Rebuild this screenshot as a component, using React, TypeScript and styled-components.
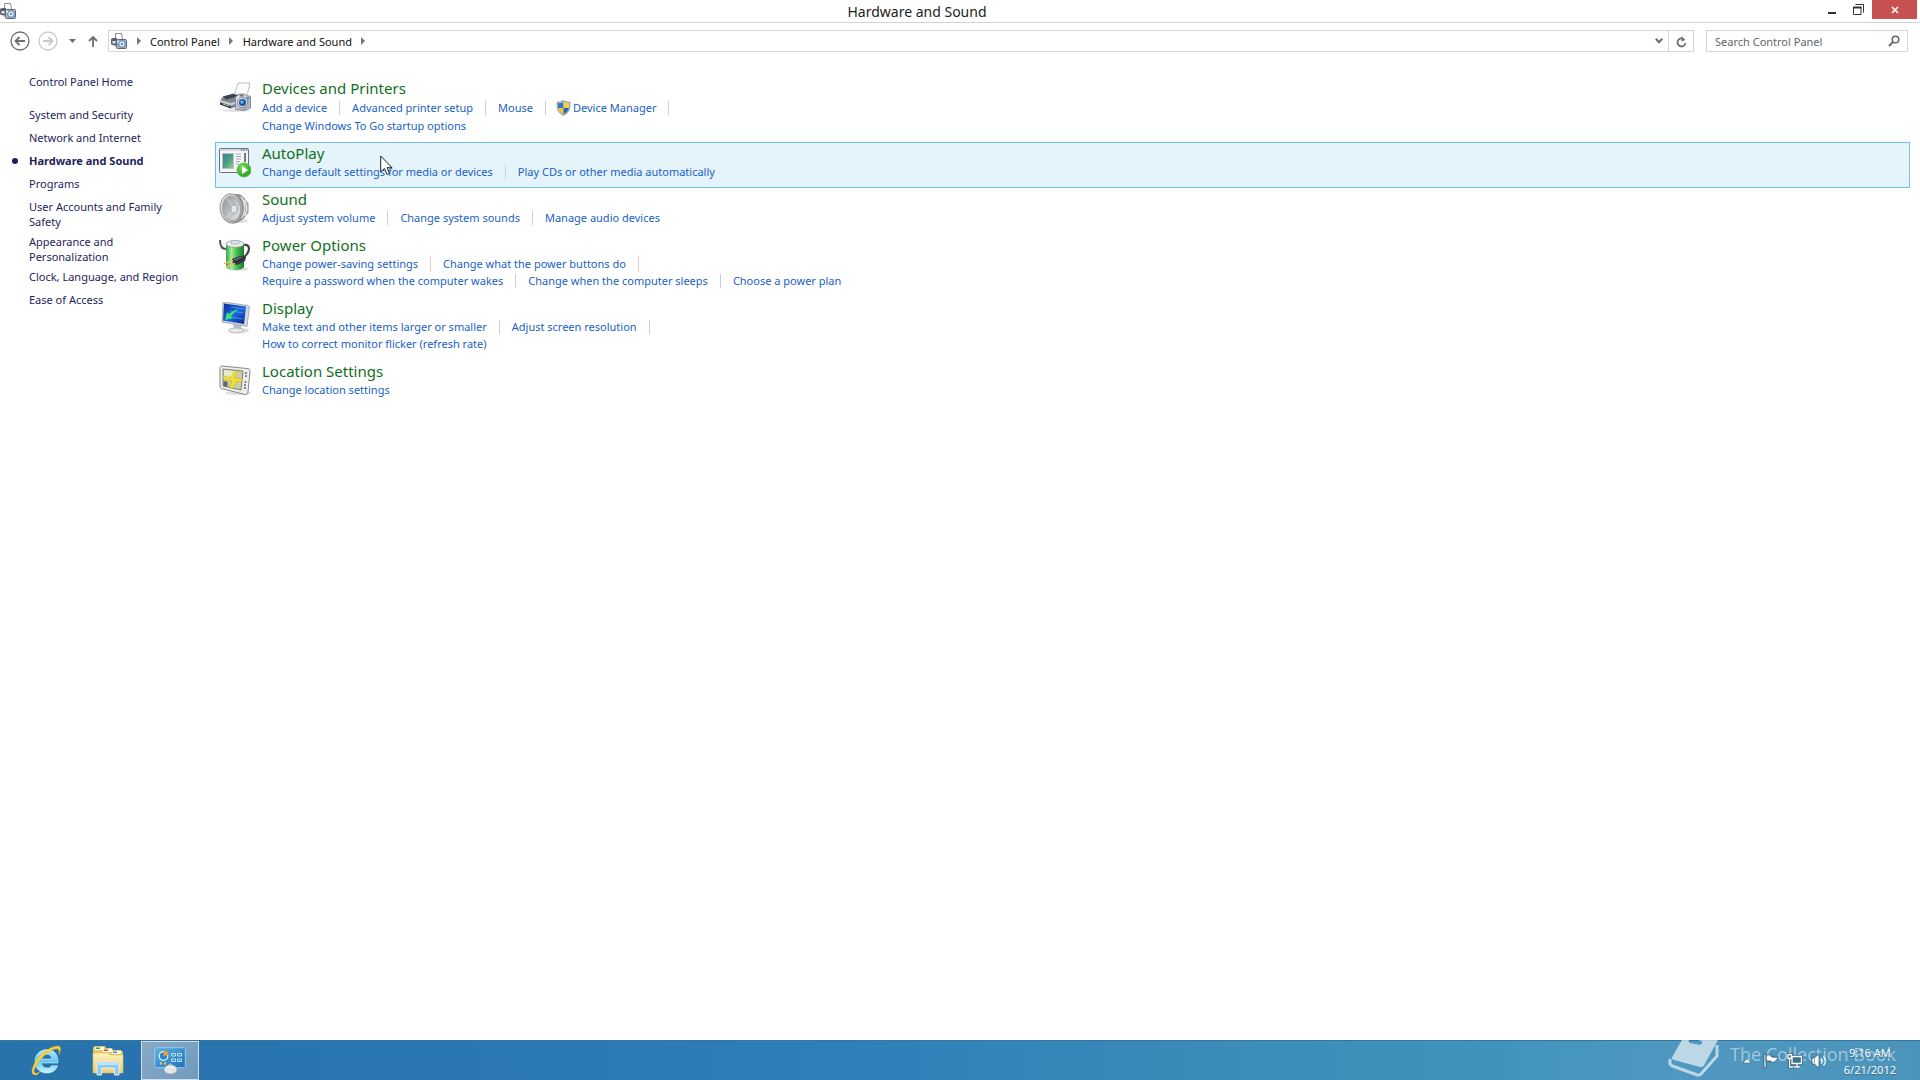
import React from 'react';
import styled, { createGlobalStyle } from 'styled-components';

const GlobalStyle = createGlobalStyle`
  *, *::before, *::after { box-sizing: border-box; }
  body {
    margin: 0;
    background: #fff;
    color: #111;
    font: 11px/15px "Noto Sans", "Open Sans", sans-serif;
  }
  svg { display: block; flex: none; }
  button { border: 0; padding: 0; background: none; font: inherit; color: inherit; }
  ul { list-style: none; margin: 0; padding: 0; }
`;

const Desktop = styled.div`
  display: flex;
  flex-direction: column;
  min-height: 100vh;
`;

/* ---------- window frame ---------- */

const TitleBar = styled.header`
  display: flex;
  align-items: flex-start;
  height: 23px;
  border-bottom: 1px solid #d3d3d3;
`;

const TitleIcon = styled.div`
  width: 16px;
  padding-top: 3px;
`;

const WindowTitle = styled.h1`
  flex: 1;
  margin: 0;
  text-align: center;
  font-size: 14px;
  line-height: 24px;
  font-weight: 400;
  color: #1c1c1c;
`;

const WindowButtons = styled.div`
  display: flex;
  padding-right: 3px;
`;

const WindowButton = styled.button<{ $close?: boolean }>`
  display: flex;
  align-items: center;
  justify-content: center;
  width: ${(p) => (p.$close ? 45 : 27)}px;
  height: 19px;
  color: ${(p) => (p.$close ? '#fff' : '#333')};
  background: ${(p) => (p.$close ? '#c75050' : 'transparent')};
`;

const NavBar = styled.div`
  display: flex;
  align-items: center;
  height: 36px;
  padding: 0 12px 0 10px;
`;

const NavButton = styled.button<{ $width: number; $faded?: boolean }>`
  display: flex;
  align-items: center;
  justify-content: center;
  width: ${(p) => p.$width}px;
  height: 22px;
  color: ${(p) => (p.$faded ? '#c9c9c9' : '#6e6e6e')};
`;

const AddressBar = styled.div`
  display: flex;
  align-items: center;
  flex: 1;
  height: 22px;
  padding-left: 2px;
  border: 1px solid #d6d6d6;
`;

const Crumbs = styled.nav`
  display: flex;
  align-items: center;
  flex: 1;
  color: #777;
`;

const Crumb = styled.a`
  color: #111;
  text-decoration: none;
`;

const CrumbArrow = styled.span`
  display: flex;
  justify-content: center;
  width: 23px;
`;

const RefreshCell = styled.div`
  display: flex;
  height: 20px;
  border-left: 1px solid #d6d6d6;
`;

const SearchBox = styled.label`
  display: flex;
  align-items: center;
  width: 202px;
  height: 22px;
  margin-left: 12px;
  padding: 0 7px 0 8px;
  border: 1px solid #d6d6d6;
  color: #666;
`;

const SearchInput = styled.input`
  flex: 1;
  min-width: 0;
  padding: 0;
  border: 0;
  outline: 0;
  background: transparent;
  font: inherit;
  color: #666;
  &::placeholder { color: #666; opacity: 1; }
`;

/* ---------- page body ---------- */

const Body = styled.div`
  display: flex;
  flex: 1;
`;

const Sidebar = styled.nav`
  width: 215px;
  flex: none;
  padding: 15px 29px 0;
`;

const SideHome = styled.a`
  display: block;
  margin-bottom: 18px;
  color: #1e1e5a;
  text-decoration: none;
`;

const SideItem = styled.li<{ $current?: boolean }>`
  position: relative;
  min-height: 23px;
  padding-bottom: 5px;
  font-weight: ${(p) => (p.$current ? 700 : 400)};
  &::before {
    content: '';
    display: ${(p) => (p.$current ? 'block' : 'none')};
    position: absolute;
    left: -17px;
    top: 5px;
    width: 6px;
    height: 6px;
    border-radius: 50%;
    background: #1e1e5a;
  }
`;

const SideLink = styled.a`
  color: #1e1e5a;
  text-decoration: none;
`;

const Main = styled.main`
  flex: 1;
  padding: 18px 10px 0 0;
`;

const Category = styled.section<{ $hover?: boolean }>`
  display: flex;
  gap: 11px;
  padding: 0 3px 7px;
  border: 1px solid ${(p) => (p.$hover ? '#70c0e7' : 'transparent')};
  background: ${(p) => (p.$hover ? '#e5f3fb' : 'transparent')};
`;

const CategoryIcon = styled.div`
  width: 32px;
  height: 32px;
  margin-top: 4px;
`;

const CategoryTitle = styled.h2`
  margin: 0;
  font-size: 15px;
  line-height: 20px;
  font-weight: 400;
  a { color: #11701a; text-decoration: none; }
`;

const TaskRow = styled.div<{ $tall?: boolean }>`
  display: flex;
  align-items: center;
  height: ${(p) => (p.$tall ? 19 : 17)}px;
`;

const TaskLink = styled.a`
  display: flex;
  align-items: center;
  gap: 2px;
  color: #1a5fc4;
  text-decoration: none;
`;

const Divider = styled.span`
  width: 1px;
  height: 14px;
  margin: 0 12px;
  background: #cfcfcf;
`;

const ShieldBox = styled.span`
  display: block;
  margin-left: -2px;
`;

const Pointer = styled.div`
  position: absolute;
  left: 380px;
  top: 155px;
  pointer-events: none;
`;

/* ---------- taskbar ---------- */

const Taskbar = styled.footer`
  position: relative;
  display: flex;
  justify-content: space-between;
  height: 40px;
  padding: 0 24px 0 17px;
  border-top: 1px solid #3577a3;
  background: linear-gradient(90deg, #2872ab 0%, #2a77b4 25%, #2f80ba 45%, #3a8bb9 62%, #4094bc 78%, #5098c1 88%, #4a93b9 100%);
  color: #fff;
`;

const AppButtons = styled.div`
  display: flex;
  gap: 4px;
`;

const AppButton = styled.button<{ $active?: boolean }>`
  display: flex;
  align-items: center;
  justify-content: center;
  width: 58px;
  padding-bottom: 2px;
  border: 1px solid ${(p) => (p.$active ? '#cfdfea' : 'transparent')};
  background: ${(p) => (p.$active ? 'linear-gradient(135deg, #8aa9c4, #6f9ac0)' : 'transparent')};
`;

const Tray = styled.div`
  position: relative;
  display: flex;
  align-items: center;
  gap: 8px;
`;

const TrayButton = styled.button`
  display: flex;
`;

const Clock = styled.time`
  margin-left: 9px;
  line-height: 17px;
  padding-top: 1px;
  text-align: center;
  text-shadow: 0 1px 1px #2d6c92;
`;

const Watermark = styled.div`
  position: absolute;
  right: 24px;
  bottom: 0;
  display: flex;
  align-items: center;
  gap: 11px;
  height: 44px;
  padding-bottom: 2px;
  font: 18px/24px "Open Sans", sans-serif;
  color: rgba(255, 255, 255, 0.48);
`;

const WatermarkText = styled.span`
  padding-bottom: 6px;
`;

/* ---------- drawings ---------- */

const DeviceSmallIcon = () => (
  <svg width="16" height="16" viewBox="0 0 16 16">
    <path d="M4.500 6V.5h6L11.500 6" fill="#fff" stroke="#8b8f98" />
    <path d="M0 6l2-1h4v7H1l-1-1z" fill="#59616c" />
    <path d="M1.500 8h3v2.500h-3z" fill="#e4e8ed" />
    <path d="M2 12h4v1.500H3z" fill="#aab1ba" />
    <rect x="5.500" y="6.500" width="10" height="9" rx="1" fill="#a3b4c7" stroke="#5c697a" />
    <circle cx="11" cy="11" r="3.300" fill="#e3f0f8" stroke="#5a7fa5" />
    <circle cx="11" cy="11" r="1.300" fill="#5b9fcb" />
    <path d="M6.500 8H8v1.500H6.500z" fill="#fff" />
  </svg>
);

const DevicesIcon = () => (
  <svg width="32" height="32" viewBox="0 0 32 32">
    <defs>
      <linearGradient id="camBody" x1="0" y1="0" x2="1" y2="1">
        <stop offset="0" stopColor="#f4f5f7" /><stop offset="1" stopColor="#8b929c" />
      </linearGradient>
    </defs>
    <ellipse cx="17" cy="28.500" rx="14" ry="1.500" fill="#000" opacity=".12" />
    <path d="M19 1l12 0-3 13-13 0z" fill="#fdfdfd" stroke="#a9adb3" strokeWidth=".8" />
    <path d="M4 14.500l10-3 7 2v10l-9 3-11-4v-4z" fill="#7e8791" />
    <path d="M4 14.500l10-2.500 6 2-13 3.500z" fill="#3a424c" />
    <path d="M1 18l11 3 7-2v2l-7 2.500-11-3z" fill="#c7ccd2" />
    <path d="M1 20.500l11 3.500v2.500l-11-4z" fill="#353c45" />
    <path d="M4 21.500l6 2v1l-6-2z" fill="#9eb9cc" />
    <path d="M19 12h7l2 2h3.500V26l-6 2.500-9-1V14.500l2-.5z" fill="url(#camBody)" stroke="#6d747e" strokeWidth=".7" />
    <path d="M27 14.500h4v11.500l-4 1.500z" fill="#aeb3bb" />
    <circle cx="23.500" cy="20.500" r="5" fill="#dfe6ec" stroke="#68737f" strokeWidth=".8" />
    <circle cx="23.500" cy="20.500" r="3.500" fill="#1d4f9b" />
    <circle cx="23" cy="20" r="1.700" fill="#69b5f0" />
    <path d="M20.500 12.500h4v2h-4z" fill="#6b7684" />
    <circle cx="29" cy="16" r="1" fill="#3a7fc9" />
  </svg>
);

const AutoPlayIcon = () => (
  <svg width="32" height="32" viewBox="0 0 32 32">
    <defs>
      <linearGradient id="apPic" x1="0" y1="0" x2="1" y2="1">
        <stop offset="0" stopColor="#3d7fa0" /><stop offset=".5" stopColor="#4d9c88" /><stop offset="1" stopColor="#9dcb83" />
      </linearGradient>
      <radialGradient id="apPlay" cx=".4" cy=".3" r=".8">
        <stop offset="0" stopColor="#7be05a" /><stop offset="1" stopColor="#22941c" />
      </radialGradient>
    </defs>
    <rect x=".5" y="1.500" width="29" height="24" rx="1" fill="#f5f6f8" stroke="#6c727d" />
    <path d="M1 2h28v2H1z" fill="#d4d8df" />
    <path d="M22 2.500h1.500v1H22zM24.500 2.500H26v1h-1.500zM27 2.500h1.500v1H27z" fill="#4b525e" />
    <path d="M3.500 6.500h11v15h-11z" fill="url(#apPic)" stroke="#b7bec6" />
    <path d="M17 7h5M17 9.500h5M17 12h5M17 14.500h4M17 17h3" stroke="#a2a9b3" />
    <path d="M26 6v9" stroke="#4a4f59" strokeWidth="1.500" />
    <circle cx="25" cy="23" r="7" fill="url(#apPlay)" stroke="#55b848" strokeWidth=".8" />
    <path d="M23 19l6 4-6 4z" fill="#fff" />
  </svg>
);

const SoundIcon = () => (
  <svg width="32" height="32" viewBox="0 0 32 32">
    <defs>
      <linearGradient id="spkRim" x1="0" y1="0" x2="1" y2="1">
        <stop offset="0" stopColor="#f4f4f4" /><stop offset="1" stopColor="#8a8a8a" />
      </linearGradient>
      <linearGradient id="spkCone" x1="0" y1="0" x2="1" y2="1">
        <stop offset="0" stopColor="#8d9297" /><stop offset=".6" stopColor="#c3c6c9" /><stop offset="1" stopColor="#ececec" />
      </linearGradient>
    </defs>
    <ellipse cx="20" cy="28" rx="9" ry="2" fill="#000" opacity=".12" />
    <path d="M15 1c6-.5 9 1.500 11 5l3.500 4.500v9L26 24c-2 3-6 5.500-11 6.500z" fill="#8d9195" />
    <path d="M22 3.500c4.500 6 5 16 0 22M25.500 7c3 5 3 12 0 16" fill="none" stroke="#e2e2e2" strokeWidth="1.600" />
    <ellipse cx="12.500" cy="15.500" rx="11.500" ry="14.800" transform="rotate(-8 12.500 15.500)" fill="url(#spkRim)" stroke="#8a8a8a" strokeWidth=".8" />
    <ellipse cx="12.500" cy="15.500" rx="9" ry="12.300" transform="rotate(-8 12.500 15.500)" fill="url(#spkCone)" stroke="#9a9a9a" strokeWidth=".6" />
    <path d="M15 15.500L8 5.500M15 15.500L7 25" stroke="#dfe2e5" strokeWidth="1.200" opacity=".6" />
    <ellipse cx="15" cy="16" rx="3.200" ry="4.200" fill="#e2e6ea" stroke="#868c92" strokeWidth=".7" />
  </svg>
);

const PowerIcon = () => (
  <svg width="32" height="32" viewBox="0 0 32 32">
    <defs>
      <linearGradient id="batt" x1="0" x2="1">
        <stop offset="0" stopColor="#2fa33e" /><stop offset=".3" stopColor="#a4eb9c" /><stop offset=".6" stopColor="#47bd50" /><stop offset="1" stopColor="#16782a" />
      </linearGradient>
    </defs>
    <ellipse cx="19" cy="30" rx="10" ry="1.800" fill="#000" opacity=".15" />
    <path d="M7 5v23c2 4 16 4 18 0V5z" fill="url(#batt)" />
    <ellipse cx="16" cy="5" rx="9" ry="3.300" fill="#eceff1" stroke="#8f9aa0" strokeWidth=".8" />
    <path d="M12 1.500h8v3c-2 1-6 1-8 0z" fill="#dde1e3" stroke="#a3acb1" strokeWidth=".7" />
    <path d="M1 1c0 6 2 9 6 9" stroke="#50545a" strokeWidth="2" fill="none" />
    <path d="M25 6c6-1 6 5 3 9-2 3-3 4-6 5" stroke="#41444a" strokeWidth="2.200" fill="none" />
    <path d="M13 20l8-3 6 1-1 4-8 4-4-1z" fill="#34363b" />
    <path d="M15 21l7-2.500" stroke="#85898f" />
    <path d="M14 21.500l-9 3M16 24.500l-9 3.500" stroke="#e3c56c" strokeWidth="1.700" />
  </svg>
);

const DisplayIcon = () => (
  <svg width="32" height="32" viewBox="0 0 32 32">
    <defs>
      <linearGradient id="scr" x1="0" y1="0" x2="1" y2="1">
        <stop offset="0" stopColor="#0c2f98" /><stop offset=".55" stopColor="#1a66df" /><stop offset="1" stopColor="#081c78" />
      </linearGradient>
    </defs>
    <ellipse cx="21" cy="28.500" rx="9" ry="2.500" fill="#000" opacity=".14" />
    <path d="M14 22l8 1 1 5h-8z" fill="#b9bfc6" />
    <ellipse cx="17" cy="28.500" rx="7.500" ry="2.500" fill="#e5e8eb" stroke="#a0a6ad" strokeWidth=".7" />
    <path d="M4 0l25 3.500 1.500 1L28 24.500 3 20z" fill="#d3d7dc" stroke="#8c939c" strokeWidth=".7" />
    <path d="M5 1.500l22 3-2 17.500L4 18.500z" fill="url(#scr)" />
    <path d="M12 5l14 2M11 9l14 2M10 15l14 2" stroke="#4da0ff" strokeWidth="1.200" opacity=".7" />
    <path d="M20 7c-5 1-8 3-10 5l-2-2-2 8 8-2-2-2c3-3 5-5 8-7z" fill="#43de75" />
  </svg>
);

const LocationIcon = () => (
  <svg width="32" height="32" viewBox="0 0 32 32">
    <ellipse cx="19" cy="28" rx="13" ry="2" fill="#000" opacity=".12" />
    <path d="M3 1l25 2.500c2 0 3 1 3 3l-2 20c0 2-1 3-3 3L4 24c-2 0-3-1-3-3V3c0-1 1-2 2-2z" fill="#eceeef" stroke="#777c80" strokeWidth=".9" />
    <path d="M4 4l20 2-2 19-18-4z" fill="#c9cfa4" stroke="#666b63" strokeWidth=".8" />
    <path d="M5 5l12 1.500-5 5-7 1z" fill="#e3ebc8" />
    <path d="M4.500 11l7 1.500L16 6l3 .3-4 6.700 8 1-.3 3-5.200-.5L14 23l-3.500-.8L13 16l-8.500-2z" fill="#f6e034" stroke="#c9ad22" strokeWidth=".5" />
    <path d="M4.500 16l4 .8v5l-4-.9z" fill="#5d665a" />
    <path d="M26 8l2 .2M26 11l2 .2M25.500 17l2 .2M25 20l2 .2M25 23l2 .2" stroke="#555" strokeWidth="1.300" />
  </svg>
);

const ShieldIcon = () => (
  <svg width="15" height="16" viewBox="0 0 15 16">
    <path d="M7.500.5c2 1.300 4 1.800 6.500 1.800 0 6-.5 10-6.500 13.200C1.500 12.300 1 8.300 1 2.300 3.500 2.300 5.500 1.800 7.500.5z" fill="#c9ced3" stroke="#7a828a" strokeWidth=".8" />
    <path d="M7.500 2v6H2.200c-.2-1.500-.2-3-.2-4.700C4 3.300 6 3 7.500 2z" fill="#2e78c8" />
    <path d="M7.500 2v6h5.300c.2-1.500.2-3 .2-4.700C11 3.300 9 3 7.500 2z" fill="#f5d33c" />
    <path d="M7.500 8v6.300C4.500 12.800 2.700 11 2.200 8z" fill="#f0c42c" />
    <path d="M7.500 8v6.300c3-1.500 4.800-3.300 5.300-6.300z" fill="#2667b4" />
  </svg>
);

const CaretRight = () => (
  <svg width="4" height="8" viewBox="0 0 4 8"><path d="M0 0l4 4-4 4z" fill="currentColor" /></svg>
);

const CircleArrow = ({ flip }: { flip?: boolean }) => (
  <svg width="20" height="20" viewBox="0 0 20 20" fill="none" stroke="currentColor">
    <circle cx="10" cy="10" r="9" strokeWidth="1.300" />
    <path d={flip ? 'M5 10h9M10.500 6l4 4-4 4' : 'M15 10H6M9.500 6l-4 4 4 4'} strokeWidth="1.800" />
  </svg>
);

const IEIcon = () => (
  <svg width="32" height="32" viewBox="0 0 32 32">
    <defs>
      <linearGradient id="ieBlue" x1="0" y1="0" x2="0" y2="1">
        <stop offset="0" stopColor="#b5ecfc" /><stop offset=".5" stopColor="#5cc8f2" /><stop offset="1" stopColor="#c9f3fd" />
      </linearGradient>
    </defs>
    <path d="M28 19H11.500c.3 3.200 2.500 5 5.500 5 2.200 0 3.600-.8 4.500-2.300h6C26 26.500 22 29 17 29 10 29 5 24.300 5 17.500S10 5.500 17 5.500 28.500 10.500 28 19zM11.700 15H22c-.4-3-2.200-4.700-5-4.700s-4.700 1.700-5.300 4.700z" fill="url(#ieBlue)" stroke="#e9faff" strokeWidth=".5" />
    <path d="M5.500 31C-1 31 2 21 9.500 12.500 17 4 27 .5 29.500 2.500c1.700 1.300 1.200 4.500-.5 8 .3-3 .3-5-1.200-5.500-3.500-1-11 3.500-16.300 9.500C5.500 21 2.500 28 5 29c1 .5 3 0 5-1.500C8.500 30 7 31 5.500 31z" fill="#f8d03b" stroke="#e0a91d" strokeWidth=".4" />
  </svg>
);

const ExplorerIcon = () => (
  <svg width="32" height="32" viewBox="0 0 32 32">
    <defs>
      <linearGradient id="folder" x1="0" y1="0" x2="0" y2="1">
        <stop offset="0" stopColor="#fdf2b8" /><stop offset="1" stopColor="#ecd07a" />
      </linearGradient>
    </defs>
    <path d="M1 3.500l2-1.500h10l1 2h6l1 2h8l2 2v20H1z" fill="#e4c76b" />
    <path d="M3 3h9v3H3z" fill="#fffbe7" /><path d="M4 3.500h4V5H4z" fill="#2fa34a" />
    <path d="M11 5h9v3h-9z" fill="#fffbe7" /><path d="M12 5.500h4V7h-4z" fill="#d2473a" />
    <path d="M20 7h9v3h-9z" fill="#fffbe7" /><path d="M21 7.500h4V9h-4z" fill="#3a85cf" />
    <path d="M1 9h14l4 2h12v18H1z" fill="url(#folder)" stroke="#dcbc60" strokeWidth=".6" />
    <path d="M5 31V19.500c0-1 .5-1.500 1.500-1.500h19c1 0 1.500.5 1.500 1.500V31h-4.500v-7h-13v7z" fill="#8ecbf0" stroke="#e4f5ff" strokeWidth=".9" />
    <path d="M6 20h20" stroke="#d7f0ff" strokeWidth="1.500" />
  </svg>
);

const ControlPanelIcon = () => (
  <svg width="32" height="32" viewBox="0 0 32 32">
    <defs>
      <linearGradient id="cpPanel" x1="0" y1="0" x2="1" y2="1">
        <stop offset="0" stopColor="#61b3e6" /><stop offset="1" stopColor="#1e6fb5" />
      </linearGradient>
    </defs>
    <rect x=".7" y="3.700" width="30.600" height="20" rx="1" fill="url(#cpPanel)" stroke="#8bcdf0" />
    <circle cx="9.500" cy="12" r="4.300" fill="#2d86c9" stroke="#e6f6ff" strokeWidth="1.200" />
    <path d="M9.500 12V6.500A5 5 0 0 1 14.500 11z" fill="#f49b36" />
    <path d="M17.500 9.500h4v2.500h-4zM23.500 9.500h4v2.500h-4zM17.500 15h4v2.500h-4zM23.500 15h4v2.500h-4z" fill="#3d94d2" stroke="#c5e6fa" strokeWidth=".9" />
    <path d="M6 19.500h2M10 19.500h2" stroke="#f9cb54" strokeWidth="2" />
    <path d="M12 23l4-4 5 4z" fill="#b6bcc2" />
    <ellipse cx="16.500" cy="25.500" rx="6.500" ry="4.500" fill="#e3e6e9" stroke="#9aa3ab" strokeWidth=".6" />
    <path d="M12.500 24c2-2 5-2 7 0" stroke="#fff" fill="none" />
  </svg>
);

const BookIcon = () => (
  <svg width="51" height="42" viewBox="0 0 51 42">
    <path
      d="M18 0h31q3 0 1.500 3L36 29.500q-1 2-4 1.500L6 24q-3-1-1.500-3.500L15 2q1-2 3-2z M21.500 3q-2 3.500.5 4l9.500 1.800q2 .2 2.500-1.800t-1-2.300L23 2.500z"
      fill="#fff"
      fillRule="evenodd"
      opacity=".62"
    />
    <path d="M2.500 23q-2 5.500 2 7l25 9q2 .5 3.500-1L49 20V9" fill="none" stroke="#fff" strokeWidth="3" opacity=".62" />
  </svg>
);

/* ---------- data ---------- */

type Task = { text: string; shield?: boolean };
type Row = { tasks: Task[]; continues?: boolean };
type Group = { title: string; icon: React.ReactNode; rows: Row[]; hover?: boolean };

const groups: Group[] = [
  {
    title: 'Devices and Printers',
    icon: <DevicesIcon />,
    rows: [
      {
        tasks: [
          { text: 'Add a device' },
          { text: 'Advanced printer setup' },
          { text: 'Mouse' },
          { text: 'Device Manager', shield: true },
        ],
        continues: true,
      },
      { tasks: [{ text: 'Change Windows To Go startup options' }] },
    ],
  },
  {
    title: 'AutoPlay',
    icon: <AutoPlayIcon />,
    hover: true,
    rows: [
      {
        tasks: [
          { text: 'Change default settings for media or devices' },
          { text: 'Play CDs or other media automatically' },
        ],
      },
    ],
  },
  {
    title: 'Sound',
    icon: <SoundIcon />,
    rows: [
      { tasks: [{ text: 'Adjust system volume' }, { text: 'Change system sounds' }, { text: 'Manage audio devices' }] },
    ],
  },
  {
    title: 'Power Options',
    icon: <PowerIcon />,
    rows: [
      { tasks: [{ text: 'Change power-saving settings' }, { text: 'Change what the power buttons do' }], continues: true },
      {
        tasks: [
          { text: 'Require a password when the computer wakes' },
          { text: 'Change when the computer sleeps' },
          { text: 'Choose a power plan' },
        ],
      },
    ],
  },
  {
    title: 'Display',
    icon: <DisplayIcon />,
    rows: [
      { tasks: [{ text: 'Make text and other items larger or smaller' }, { text: 'Adjust screen resolution' }], continues: true },
      { tasks: [{ text: 'How to correct monitor flicker (refresh rate)' }] },
    ],
  },
  {
    title: 'Location Settings',
    icon: <LocationIcon />,
    rows: [{ tasks: [{ text: 'Change location settings' }] }],
  },
];

const sections = [
  'System and Security',
  'Network and Internet',
  'Hardware and Sound',
  'Programs',
  'User Accounts and Family Safety',
  'Appearance and Personalization',
  'Clock, Language, and Region',
  'Ease of Access',
];

export default function App() {
  return (
    <Desktop>
      <GlobalStyle />
      <TitleBar>
        <TitleIcon><DeviceSmallIcon /></TitleIcon>
        <WindowTitle>Hardware and Sound</WindowTitle>
        <WindowButtons>
          <WindowButton aria-label="Minimize">
            <svg width="10" height="10" viewBox="0 0 10 10"><path d="M1 7h8v2H1z" fill="currentColor" /></svg>
          </WindowButton>
          <WindowButton aria-label="Restore">
            <svg width="11" height="11" viewBox="0 0 11 11" fill="none" stroke="currentColor">
              <path d="M2.500.5h8v8M.5 3.500h7.500v7H.5z" />
              <path d="M0 3.500h8.500" strokeWidth="2" />
            </svg>
          </WindowButton>
          <WindowButton aria-label="Close" $close>
            <svg width="8" height="8" viewBox="0 0 8 8"><path d="M1 1l6 6M7 1L1 7" stroke="currentColor" strokeWidth="1.600" /></svg>
          </WindowButton>
        </WindowButtons>
      </TitleBar>

      <NavBar>
        <NavButton aria-label="Back" $width={20}><CircleArrow /></NavButton>
        <NavButton aria-label="Forward" $width={36} $faded><CircleArrow flip /></NavButton>
        <NavButton aria-label="Recent locations" $width={12}>
          <svg width="7" height="4" viewBox="0 0 7 4"><path d="M0 0h7L3.500 4z" fill="currentColor" /></svg>
        </NavButton>
        <NavButton aria-label="Up" $width={30}>
          <svg width="10" height="12" viewBox="0 0 10 12" fill="none" stroke="currentColor" strokeWidth="1.800">
            <path d="M5 12V2M1 6l4-4 4 4" />
          </svg>
        </NavButton>
        <AddressBar>
          <DeviceSmallIcon />
          <Crumbs aria-label="Address">
            <CrumbArrow><CaretRight /></CrumbArrow>
            <Crumb href="#control-panel">Control Panel</Crumb>
            <CrumbArrow><CaretRight /></CrumbArrow>
            <Crumb href="#hardware-and-sound">Hardware and Sound</Crumb>
            <CrumbArrow><CaretRight /></CrumbArrow>
          </Crumbs>
          <NavButton aria-label="Previous locations" $width={18}>
            <svg width="8" height="6" viewBox="0 0 8 6"><path d="M.8.8L4 4.200 7.200.8" fill="none" stroke="currentColor" strokeWidth="2" /></svg>
          </NavButton>
          <RefreshCell>
            <NavButton aria-label="Refresh" $width={24}>
              <svg width="11" height="12" viewBox="0 0 11 12">
                <path d="M6 2.500A4 4 0 1 0 9.500 7" fill="none" stroke="currentColor" strokeWidth="1.800" />
                <path d="M5.500 0v5.500L9.500 4z" fill="currentColor" />
              </svg>
            </NavButton>
          </RefreshCell>
        </AddressBar>
        <SearchBox>
          <SearchInput type="text" aria-label="Search Control Panel" placeholder="Search Control Panel" />
          <svg width="12" height="12" viewBox="0 0 12 12" fill="none" stroke="currentColor">
            <circle cx="7.500" cy="4.500" r="3.300" strokeWidth="1.500" />
            <path d="M5 7L1 11" strokeWidth="2" />
          </svg>
        </SearchBox>
      </NavBar>

      <Body>
        <Sidebar aria-label="Categories">
          <SideHome href="#home">Control Panel Home</SideHome>
          <ul>
            {sections.map((name) => (
              <SideItem key={name} $current={name === 'Hardware and Sound'}>
                <SideLink href="#section">{name}</SideLink>
              </SideItem>
            ))}
          </ul>
        </Sidebar>

        <Main>
          {groups.map((group) => (
            <Category key={group.title} $hover={group.hover}>
              <CategoryIcon>{group.icon}</CategoryIcon>
              <div>
                <CategoryTitle><a href="#category">{group.title}</a></CategoryTitle>
                {group.rows.map((row, r) => (
                  <TaskRow key={r} $tall={row.tasks.some((t) => t.shield)}>
                    {row.tasks.map((task, i) => (
                      <React.Fragment key={task.text}>
                        {i > 0 && <Divider />}
                        <TaskLink href="#task">
                          {task.shield && <ShieldBox><ShieldIcon /></ShieldBox>}
                          {task.text}
                        </TaskLink>
                      </React.Fragment>
                    ))}
                    {row.continues && <Divider />}
                  </TaskRow>
                ))}
              </div>
            </Category>
          ))}
        </Main>
      </Body>

      <Taskbar>
        <AppButtons>
          <AppButton aria-label="Internet Explorer"><IEIcon /></AppButton>
          <AppButton aria-label="File Explorer"><ExplorerIcon /></AppButton>
          <AppButton aria-label="Control Panel" $active><ControlPanelIcon /></AppButton>
        </AppButtons>
        <Watermark>
          <BookIcon />
          <WatermarkText>The Collection Book</WatermarkText>
        </Watermark>
        <Tray>
          <TrayButton aria-label="Show hidden icons">
            <svg width="13" height="16" viewBox="0 0 13 16"><path d="M1 10l4-4.500L9 10z" fill="#fff" stroke="#2f6484" strokeWidth=".6" /></svg>
          </TrayButton>
          <TrayButton aria-label="Action Center">
            <svg width="16" height="16" viewBox="0 0 16 16">
              <path d="M1 1h2v14H1zM3 2h5v1.500c2 1 4 1 7 .5-1 3-3 6-7 5V8H3z" fill="#fff" stroke="#22475f" strokeWidth=".7" />
            </svg>
          </TrayButton>
          <TrayButton aria-label="Network">
            <svg width="16" height="16" viewBox="0 0 16 16">
              <path d="M5 3.500h9.500v7H5zM7 14h6M10 10.500V14M2.500 6v8H6M1 1.500h3.500v4H1z" fill="none" stroke="#22475f" strokeWidth="2.600" />
              <path d="M5 3.500h9.500v7H5zM7 14h6M10 10.500V14M2.500 6v8H6M1 1.500h3.500v4H1z" fill="#3c7392" stroke="#fff" strokeWidth="1.300" />
            </svg>
          </TrayButton>
          <TrayButton aria-label="Volume">
            <svg width="16" height="16" viewBox="0 0 16 16">
              <path d="M1 5h2l5-4v14l-5-4H1z" fill="#fff" stroke="#22475f" strokeWidth=".7" />
              <path d="M3.500 5.500v5" stroke="#8fa9b8" />
              <path d="M10 5.500c1.500 1.500 1.500 3.500 0 5M12.500 3.500c2.500 2.500 2.500 6.500 0 9" fill="none" stroke="#fff" strokeWidth="1.200" />
            </svg>
          </TrayButton>
          <Clock dateTime="2012-06-21T09:16">9:16 AM<br />6/21/2012</Clock>
        </Tray>
      </Taskbar>

      <Pointer>
        <svg width="13" height="21" viewBox="0 0 13 21">
          <path d="M.7 1v16l3.700-3.500L7 19.500l2.500-1L7 12.700h5z" fill="#fff" stroke="#222" />
        </svg>
      </Pointer>
    </Desktop>
  );
}
